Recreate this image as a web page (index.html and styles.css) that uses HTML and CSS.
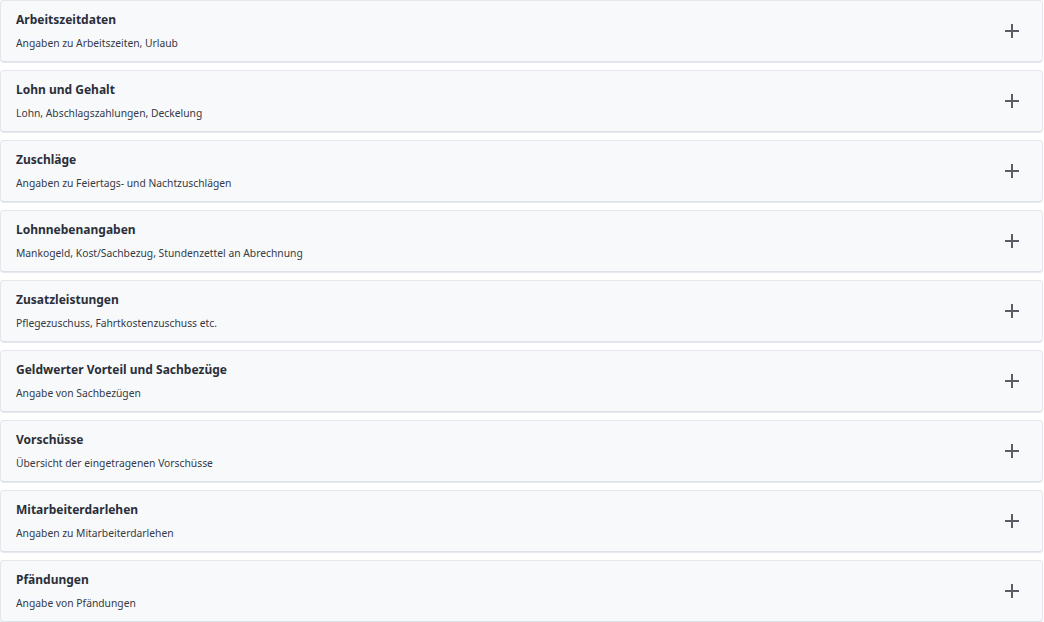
FILE: index.html
```html
<!DOCTYPE html>
<html lang="de">
<head>
    <meta charset="UTF-8">
    <meta name="viewport" content="width=device-width, initial-scale=1.0">
    <title>Lohnangaben</title>
    <link rel="stylesheet" href="styles.css">
</head>
<body>

    <div class="accordion">
        <div class="panel">
            <div class="panel-text">
                <h3>Arbeitszeitdaten</h3>
                <p>Angaben zu Arbeitszeiten, Urlaub</p>
            </div>
            <span class="plus"></span>
        </div>
        <div class="panel">
            <div class="panel-text">
                <h3>Lohn und Gehalt</h3>
                <p>Lohn, Abschlagszahlungen, Deckelung</p>
            </div>
            <span class="plus"></span>
        </div>
        <div class="panel">
            <div class="panel-text">
                <h3>Zuschläge</h3>
                <p>Angaben zu Feiertags- und Nachtzuschlägen</p>
            </div>
            <span class="plus"></span>
        </div>
        <div class="panel">
            <div class="panel-text">
                <h3>Lohnnebenangaben</h3>
                <p>Mankogeld, Kost/Sachbezug, Stundenzettel an Abrechnung</p>
            </div>
            <span class="plus"></span>
        </div>
        <div class="panel">
            <div class="panel-text">
                <h3>Zusatzleistungen</h3>
                <p>Pflegezuschuss, Fahrtkostenzuschuss etc.</p>
            </div>
            <span class="plus"></span>
        </div>
        <div class="panel">
            <div class="panel-text">
                <h3>Geldwerter Vorteil und Sachbezüge</h3>
                <p>Angabe von Sachbezügen</p>
            </div>
            <span class="plus"></span>
        </div>
        <div class="panel">
            <div class="panel-text">
                <h3>Vorschüsse</h3>
                <p>Übersicht der eingetragenen Vorschüsse</p>
            </div>
            <span class="plus"></span>
        </div>
        <div class="panel">
            <div class="panel-text">
                <h3>Mitarbeiterdarlehen</h3>
                <p>Angaben zu Mitarbeiterdarlehen</p>
            </div>
            <span class="plus"></span>
        </div>
        <div class="panel">
            <div class="panel-text">
                <h3>Pfändungen</h3>
                <p>Angabe von Pfändungen</p>
            </div>
            <span class="plus"></span>
        </div>
    </div>

</body>
</html>
```

FILE: styles.css
```css
/* Grundlayout */
body {
    margin: 0;
    font-family: "Noto Sans", Arial, sans-serif;
    background-color: #ffffff;
    color: #2d3340;
}
.accordion {
    display: flex;
    flex-direction: column;
    gap: 8px;
    width: 1043px;
}
.panel {
    display: flex;
    align-items: center;
    justify-content: space-between;
    box-sizing: border-box;
    height: 62px;
    padding: 10px 15px;
    background-color: #f8f9fb;
    border: 1px solid #e4e7ee;
    border-bottom-color: #dde1ea;
    border-radius: 4px;
    box-shadow: 0 1px 0 #e6e9f0;
}
.panel h3 {
    margin: 0;
    font-size: 12px;
    line-height: 18px;
    font-weight: 700;
    color: #2a2f3a;
}
.panel p {
    margin: 6px 0 0;
    font-size: 10.3px;
    line-height: 16px;
    color: #353a45;
}
.plus {
    position: relative;
    width: 14px;
    height: 14px;
    margin-right: 8px;
}
.plus::before, .plus::after {
    content: "";
    position: absolute;
    background-color: #5a5d63;
}
.plus::before {
    left: 6px;
    top: 0;
    width: 1.5px;
    height: 14px;
}
.plus::after {
    top: 6px;
    left: 0;
    height: 1.5px;
    width: 14px;
}
```
